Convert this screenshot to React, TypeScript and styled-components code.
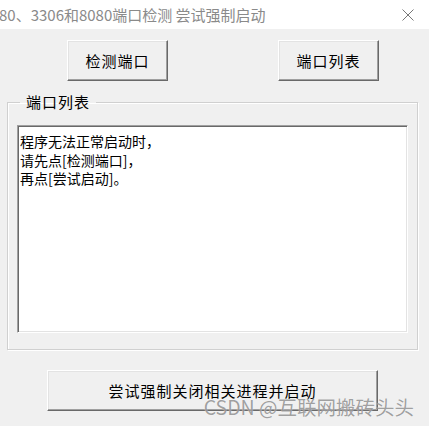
import { createGlobalStyle, styled } from 'styled-components'

const GlobalStyle = createGlobalStyle`
  html, body {
    margin: 0;
    padding: 0;
    background: #f0f0f0;
  }
  body {
    font-family: 'Noto Sans CJK SC', 'Noto Sans', sans-serif;
  }
`

export default function App() {
  return (
    <>
      <GlobalStyle />
      <Window>
        <TitleBar>
          <Title>80、3306和8080端口检测 尝试强制启动</Title>
          <CloseButton aria-label="close">
            <svg width="12" height="12" viewBox="0 0 12 12">
              <path d="M0.5 0.5 L11.5 11.5 M11.5 0.5 L0.5 11.5" stroke="#777" strokeWidth="1" fill="none" />
            </svg>
          </CloseButton>
        </TitleBar>
        <Body>
          <ButtonRow>
            <ClassicButton>检测端口</ClassicButton>
            <ClassicButton>端口列表</ClassicButton>
          </ButtonRow>
          <GroupBox>
            <Legend>端口列表</Legend>
            <TextArea>
              程序无法正常启动时，
              <br />
              请先点[检测端口]，
              <br />
              再点[尝试启动]。
            </TextArea>
          </GroupBox>
          <WideButton>尝试强制关闭相关进程并启动</WideButton>
        </Body>
        <Watermark>CSDN @互联网搬砖头头</Watermark>
      </Window>
    </>
  )
}

const Window = styled.div`
  position: relative;
  width: 429px;
  height: 426px;
  overflow: hidden;
  background: #f0f0f0;
  display: flex;
  flex-direction: column;
`

const TitleBar = styled.div`
  height: 29px;
  background: #ffffff;
  display: flex;
  align-items: center;
  justify-content: space-between;
  padding-right: 15px;
`

const Title = styled.div`
  font-size: 15px;
  color: #8a8a8a;
  white-space: nowrap;
  margin-left: -1px;
`

const CloseButton = styled.div`
  width: 12px;
  height: 12px;
  display: flex;
`

const Body = styled.div`
  display: flex;
  flex-direction: column;
`

const ButtonRow = styled.div`
  display: flex;
  justify-content: space-between;
  padding: 11px 50px 0 67px;
`

const ClassicButton = styled.button`
  box-sizing: border-box;
  width: 101px;
  height: 41px;
  padding: 0;
  background: #f0f0f0;
  border: 1px solid;
  border-color: #ffffff #696969 #696969 #ffffff;
  box-shadow: inset -1px -1px 0 #a0a0a0, inset 1px 1px 0 #e3e3e3;
  font-family: 'Noto Sans CJK SC', sans-serif;
  font-size: 15px;
  letter-spacing: 1px;
  color: #000;
`

const WideButton = styled(ClassicButton)`
  width: 331px;
  margin: 20px 0 0 47px;
`

const GroupBox = styled.fieldset`
  box-sizing: border-box;
  margin: 11px 0 0 7px;
  width: 411px;
  height: 258px;
  padding: 13px 9px 0 9px;
  border: 1px solid #d0d0d0;
  box-shadow: inset 1px 1px 0 #ffffff, 1px 1px 0 #ffffff;
`

const Legend = styled.legend`
  margin-left: 3px;
  padding: 0 6px;
  font-size: 15px;
  line-height: 20px;
  letter-spacing: 1px;
  color: #000;
`

const TextArea = styled.div`
  box-sizing: border-box;
  height: 208px;
  background: #ffffff;
  border: 1px solid;
  border-color: #a0a0a0 #ffffff #ffffff #a0a0a0;
  box-shadow: inset 1px 1px 0 #696969, inset -1px -1px 0 #e3e3e3;
  padding: 6px 2px 0 2px;
  font-size: 14px;
  line-height: 18.5px;
  color: #000;
`

const Watermark = styled.div`
  position: absolute;
  right: 15px;
  bottom: 5px;
  font-size: 19.5px;
  color: rgba(120, 120, 120, 0.7);
  white-space: nowrap;
  text-shadow: 0 0 1px rgba(255, 255, 255, 0.8);
`
